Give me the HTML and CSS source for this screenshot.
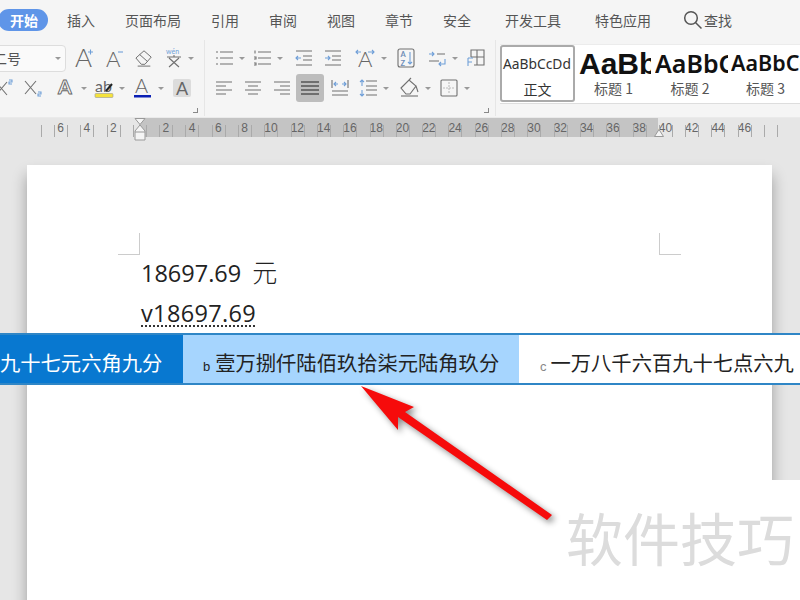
FILE: index.html
```html
<!DOCTYPE html>
<html lang="zh-CN">
<head>
<meta charset="UTF-8">
<title>文字文稿</title>
<link rel="stylesheet" href="styles.css">
</head>
<body>
<div class="app">
  <div class="tabs">
    <span class="tab active">开始</span>
    <span class="tab first">插入</span>
    <span class="tab">页面布局</span>
    <span class="tab">引用</span>
    <span class="tab">审阅</span>
    <span class="tab">视图</span>
    <span class="tab">章节</span>
    <span class="tab">安全</span>
    <span class="tab wide">开发工具</span>
    <span class="tab wide">特色应用</span>
    <span class="search">
      <svg width="20" height="20" viewBox="0 0 20 20"><circle cx="8" cy="8" r="6.3"/><path d="M12.5 12.5L18.5 18.5"/></svg>
      查找
    </span>
  </div>

  <div class="tools">
    <div class="group font-group">
      <div class="row">
        <div class="select"><span>二号</span><i class="caret"></i></div>
        <svg class="ic ml9" viewBox="0 0 18 20"><text x="0" y="19" class="big">A</text><path class="blue" d="M13 4h5M15.500 1.500v5"/></svg>
        <svg class="ic ml12" viewBox="0 0 18 20"><text x="1" y="19" class="mid">A</text><path class="blue" d="M13 4h5"/></svg>
        <svg class="ic ml12" viewBox="0 0 20 20"><path d="M1 10L10 2l8 7-7 8H7z"/><path d="M5 6l9 8M3 19h14"/></svg>
        <svg class="ic ml12" viewBox="0 0 18 20"><text x="1" y="6" class="wen">wén</text><path d="M2 9h14M9 7v2M4 10l10 9M14 10L4 19"/></svg>
        <i class="caret ml5"></i>
      </div>
      <div class="row">
        <svg class="ic neg5" viewBox="0 0 18 18"><path d="M1 3l11 13M12 3L1 16"/><path class="blue" d="M14 1h3v2h-3v2h3"/></svg>
        <svg class="ic ml11" viewBox="0 0 18 18"><path d="M1 2l11 13M12 2L1 15"/><path class="blue" d="M14 13h3v2h-3v2h3"/></svg>
        <svg class="ic ml15" viewBox="0 0 20 20"><text x="1" y="17" class="outline">A</text></svg>
        <i class="caret ml6"></i>
        <svg class="ic ml8" viewBox="0 0 18 20"><text x="0" y="14" class="small">ab</text><path d="M11 13l6-7" class="dark"/><rect y="15.500" width="18" height="4" rx="1" class="yellow"/></svg>
        <i class="caret ml6"></i>
        <svg class="ic ml9" viewBox="0 0 18 20"><text x="1" y="15" class="mid2">A</text><rect y="17" width="17" height="2.500" class="navy"/></svg>
        <i class="caret ml6"></i>
        <span class="shade-a ml9">A</span>
      </div>
      <i class="launcher"></i>
    </div>

    <div class="group para-group">
      <div class="row">
        <svg class="ic" viewBox="0 0 18 18"><path d="M5 3h13M5 9h13M5 15h13M1 3h2M1 9h2M1 15h2"/></svg>
        <i class="caret ml6"></i>
        <svg class="ic ml8" viewBox="0 0 18 18"><path d="M5 3h13M5 9h13M5 15h13M2 1.500v3M1 8h2v2H1M1 14h2v2H1"/></svg>
        <i class="caret ml6"></i>
        <svg class="ic ml12" viewBox="0 0 18 18"><path d="M1 2h16M8 7h9M8 11h9M1 16h16"/><path class="blue" d="M6 9H1M3 7L1 9l2 2"/></svg>
        <svg class="ic ml11" viewBox="0 0 18 18"><path d="M1 2h16M8 7h9M8 11h9M1 16h16"/><path class="blue" d="M1 9h5M4 7l2 2-2 2"/></svg>
        <svg class="ic wide20 ml13" viewBox="0 0 20 20"><text x="3" y="19" class="mid">A</text><path class="blue" d="M1 4h5M3 2L1 4l2 2M13 4h6M17 2l2 2-2 2"/></svg>
        <i class="caret ml6"></i>
        <svg class="ic ml10" viewBox="0 0 18 20"><rect x="1" y="1" width="16" height="18" rx="2"/><text x="3.500" y="8.500" class="az">A</text><text x="3.500" y="17.500" class="az">Z</text><path class="blue" d="M13 4v12M11 14l2 2 2-2"/></svg>
        <svg class="ic ml13" viewBox="0 0 18 18"><path d="M9 5h8M1 12h10"/><path class="blue" d="M1 5h5M4 3l2 2-2 2M17 10v5h-6M13 13l-2 2 2 2"/></svg>
        <i class="caret ml6"></i>
        <svg class="ic ml9" viewBox="0 0 18 18"><path d="M4 8V1h13v15H7M10 1v15M4 8h13"/><path class="blue" d="M1 9v8M1 9h5M1 13h4"/></svg>
      </div>
      <div class="row">
        <svg class="ic" viewBox="0 0 18 18"><path d="M1 3h16M1 7h10M1 11h16M1 15h10"/></svg>
        <svg class="ic ml11" viewBox="0 0 18 18"><path d="M1 3h16M4 7h10M1 11h16M4 15h10"/></svg>
        <svg class="ic ml11" viewBox="0 0 18 18"><path d="M1 3h16M7 7h10M1 11h16M7 15h10"/></svg>
        <span class="justify ml5"><svg width="18" height="18" viewBox="0 0 18 18"><path d="M0 3h18M0 7h18M0 11h18M0 15h18"/></svg></span>
        <svg class="ic ml7" viewBox="0 0 18 18"><path d="M1 1v8M17 1v8M1 12h16M1 16h16"/><path class="blue" d="M3 5h4M5 3L3 5l2 2M15 5h-4M13 3l2 2-2 2"/></svg>
        <svg class="ic ml10" viewBox="0 0 18 18"><path d="M7 2h11M7 7h11M7 11h11M7 16h11"/><path class="blue" d="M3 7V1M1 3l2-2 2 2M3 11v6M1 15l2 2 2-2"/></svg>
        <i class="caret ml6"></i>
        <svg class="ic wide20 ml11" viewBox="0 0 20 20"><path d="M1 10l8-8 7 6-6 8H6zM9 2l2-2M16 8l2 6"/><path d="M1 18h17"/></svg>
        <i class="caret ml5"></i>
        <svg class="ic ml9" viewBox="0 0 18 18"><rect x="1" y="1" width="16" height="16" rx="1"/><path class="dash" d="M9 3v12M3 9h12"/></svg>
        <i class="caret ml6"></i>
      </div>
      <i class="launcher"></i>
    </div>

    <div class="styles">
      <div class="style selected"><div class="sample s0">AaBbCcDd</div><div class="label">正文</div></div>
      <div class="style h1"><div class="sample s1">AaBb</div><div class="label">标题 1</div></div>
      <div class="style h2"><div class="sample s2">AaBbC</div><div class="label">标题 2</div></div>
      <div class="style h3"><div class="sample s3">AaBbCc</div><div class="label">标题 3</div></div>
    </div>
  </div>

  <div class="ruler">
    <span class="cell half"></span>
    <span class="cell">6</span>
    <span class="cell">4</span>
    <span class="cell">2</span>
    <span class="cell"></span>
    <span class="cell">2</span>
    <span class="cell">4</span>
    <span class="cell">6</span>
    <span class="cell">8</span>
    <span class="cell">10</span>
    <span class="cell">12</span>
    <span class="cell">14</span>
    <span class="cell">16</span>
    <span class="cell">18</span>
    <span class="cell">20</span>
    <span class="cell">22</span>
    <span class="cell">24</span>
    <span class="cell">26</span>
    <span class="cell">28</span>
    <span class="cell">30</span>
    <span class="cell">32</span>
    <span class="cell">34</span>
    <span class="cell">36</span>
    <span class="cell">38</span>
    <span class="cell">40</span>
    <span class="cell">42</span>
    <span class="cell">44</span>
    <span class="cell">46</span>
    <span class="cell"></span>
    <svg class="indent-left" width="12" height="24" viewBox="0 0 12 24"><path d="M1 .5h10L6 6.500zM6 7l5 6v9H1v-9zM1 14h10"/></svg>
    <svg class="indent-right" width="10" height="8" viewBox="0 0 10 8"><path d="M5 .5L9.500 7.500H.5z"/></svg>
  </div>

  <div class="canvas">
    <div class="page">
      <i class="corner left"></i>
      <i class="corner right"></i>
      <p class="line">18697.69<span class="yuan">元</span></p>
      <p class="line"><span class="dotted">v18697.69</span></p>
    </div>
  </div>

  <div class="candidates">
    <div class="cand cand-a">九十七元六角九分</div>
    <div class="cand cand-b"><small>b</small>壹万捌仟陆佰玖拾柒元陆角玖分</div>
    <div class="cand cand-c"><small>c</small>一万八千六百九十七点六九</div>
  </div>

  <div class="watermark">软件技巧</div>

  <svg class="arrow" width="800" height="600" viewBox="0 0 800 600"><polygon points="361,386 414,407 405,412 552,515 547,520 398,417 398,430"/></svg>
</div>
</body>
</html>
```

FILE: styles.css
```css
*{
 box-sizing: border-box;
}
body{
 margin: 0;
 font-family: "Noto Sans CJK SC", "Noto Sans", sans-serif;
}
.app{
 position: relative;
 width: 800px;
 height: 600px;
 overflow: hidden;
 display: flex;
 flex-direction: column;
 background-color: #e6e6e6;
}

/* top tabs */
.tabs{
 height: 40px;
 flex: none;
 display: flex;
 align-items: center;
 gap: 30px;
 background-color: #f5f5f5;
 color: #555;
 font-size: 14px;
}
.tab{
 white-space: nowrap;
}
.tab.active{
 width: 50px;
 height: 22px;
 margin-left: -2px;
 padding-left: 12px;
 line-height: 22px;
 border-radius: 11px;
 background-color: #5f95e8;
 color: #fff;
 font-weight: bold;
}
.tab.first{
 margin-left: -11px;
}
.tab.wide{
 margin-left: 4px;
}
.search{
 margin-left: 2px;
 display: flex;
 align-items: center;
 gap: 1px;
}
.search svg{
 fill: none;
 stroke: #555;
 stroke-width: 1.5;
}

/* ribbon */
.tools{
 height: 78px;
 flex: none;
 display: flex;
 background-color: #f5f5f5;
 border-bottom: 1px solid #eaeaea;
}
.group{
 position: relative;
 padding-top: 4px;
 display: flex;
 flex-direction: column;
 gap: 2px;
 border-right: 1px solid #e6e6e6;
 height: 76px;
}
.font-group{
 width: 205px;
}
.para-group{
 width: 291px;
 padding-left: 10px;
}
.row{
 height: 28px;
 display: flex;
 align-items: center;
}
.ic{
 flex: none;
 width: 18px;
 height: 20px;
 overflow: visible;
 fill: none;
 stroke: #707070;
 stroke-width: 1.1;
}
.ic.wide20{
 width: 20px;
}
.ic text{
 font-family: "Lato", "Liberation Sans", sans-serif;
 font-weight: 300;
 fill: #666;
 stroke: none;
}
.ic .big{
 font-size: 26px;
}
.ic .mid{
 font-size: 22px;
}
.ic .mid2{
 font-size: 20px;
}
.ic .small{
 font-size: 16px;
 font-weight: 400;
}
.ic .wen{
 font-size: 7px;
 font-weight: 400;
 fill: #6f9fd8;
}
.ic .outline{
 font-size: 22px;
 font-weight: 700;
 fill: #f5f5f5;
 stroke: #666;
 stroke-width: 1;
}
.ic .az{
 font-size: 7.5px;
 font-weight: 700;
 fill: #6f8fb8;
}
.ic .blue{
 stroke: #6f9fd8;
}
.ic .dark{
 stroke: #222;
 stroke-width: 2;
}
.ic .yellow{
 fill: #f5e23c;
 stroke: #999;
 stroke-width: .6;
}
.ic .navy{
 fill: #0a1fb4;
 stroke: none;
}
.ic .dash{
 stroke: #bbb;
 stroke-dasharray: 2 1;
}
.caret{
 flex: none;
 width: 0;
 height: 0;
 border-left: 3px solid transparent;
 border-right: 3px solid transparent;
 border-top: 3px solid #999;
}
.ml5{margin-left: 5px;}
.ml6{margin-left: 6px;}
.ml7{margin-left: 7px;}
.ml8{margin-left: 8px;}
.ml9{margin-left: 9px;}
.ml10{margin-left: 10px;}
.ml11{margin-left: 11px;}
.ml12{margin-left: 12px;}
.ml13{margin-left: 13px;}
.ml15{margin-left: 15px;}
.neg5{
 margin-left: -5px;
}
.select{
 flex: none;
 width: 76px;
 height: 27px;
 margin-left: -10px;
 padding: 0 4px 0 2px;
 display: flex;
 align-items: center;
 justify-content: space-between;
 background-color: #fafafa;
 border: 1px solid #ddd;
 border-radius: 4px;
 color: #555;
 font-size: 14px;
}
.shade-a{
 flex: none;
 width: 18px;
 height: 18px;
 line-height: 18px;
 text-align: center;
 background-color: #dcdcdc;
 border-radius: 2px;
 color: #666;
 font-family: "Lato", "Liberation Sans", sans-serif;
 font-size: 18px;
}
.justify{
 flex: none;
 width: 28px;
 height: 28px;
 padding: 5px;
 background-color: #bdbdbd;
 border-radius: 3px;
}
.justify svg{
 display: block;
 fill: none;
 stroke: #555;
 stroke-width: 1.4;
}
.launcher{
 position: absolute;
 right: 6px;
 bottom: 3px;
 width: 5px;
 height: 5px;
 border-right: 1px solid #888;
 border-bottom: 1px solid #888;
}

/* style gallery */
.styles{
 flex: 1;
 height: 60px;
 margin: 4px 0 0 4px;
 display: flex;
 overflow: hidden;
 background-color: #fff;
 border-top: 1px solid #ececec;
 border-bottom: 1px solid #ddd;
}
.style{
 flex: none;
 overflow: hidden;
 text-align: center;
}
.selected{
 width: 75px;
 height: 57px;
 border: 2px solid #aaa;
 border-radius: 3px;
}
.h1{
 width: 72px;
 margin-left: 4px;
}
.h2{
 width: 73px;
 margin-left: 4px;
}
.h3{
 width: 72px;
 margin-left: 3px;
}
.sample{
 height: 33px;
 white-space: nowrap;
 color: #111;
 font-family: "Liberation Sans", sans-serif;
 text-align: left;
}
.s0{
 padding: 7px 0 0 1px;
 font-size: 13.8px;
 font-family: "Noto Sans", sans-serif;
 color: #333;
}
.s1{
 padding-top: 4px;
 font-size: 30px;
 font-weight: bold;
 line-height: 29px;
}
.s2{
 padding-top: 3px;
 font-size: 25px;
 font-weight: 600;
 line-height: 30px;
 font-family: "Noto Sans", sans-serif;
}
.s3{
 padding-top: 3px;
 font-size: 21.5px;
 font-weight: 600;
 line-height: 30px;
 font-family: "Noto Sans", sans-serif;
}
.label{
 margin-top: 1px;
 padding-right: 3px;
 color: #555;
 font-size: 14px;
 line-height: 18px;
}
.selected .label{
 margin-top: 0;
 padding-right: 0;
 color: #333;
}

/* ruler */
.ruler{
 position: relative;
 height: 19px;
 flex: none;
 padding-left: 27.7px;
 display: flex;
 background: linear-gradient(90deg, transparent 139px, #c4c4c4 139px, #c4c4c4 658px, transparent 658px);
}
.cell{
 position: relative;
 flex: none;
 width: 26.3px;
 height: 19px;
 padding-right: 13px;
 text-align: center;
 color: #666;
 font-family: "Liberation Sans", sans-serif;
 font-size: 12px;
 line-height: 20px;
 white-space: nowrap;
}
.cell::before,
.cell::after{
 content: "";
 position: absolute;
 top: 7px;
 height: 12px;
 width: 1px;
 background-color: #aaa;
}
.cell::before{
 left: 0;
}
.cell::after{
 left: 13px;
}
.cell.half::before{
 display: none;
}
.indent-left{
 position: absolute;
 left: 134px;
 top: 0;
 fill: #f5f5f5;
 stroke: #999;
}
.indent-right{
 position: absolute;
 left: 654px;
 top: 11px;
 fill: #f5f5f5;
 stroke: #999;
}

/* document */
.canvas{
 flex: 1;
 padding: 28px 0 0 27px;
 overflow: hidden;
}
.page{
 position: relative;
 width: 745px;
 height: 460px;
 padding: 88px 0 0 114px;
 background-color: #fff;
 box-shadow: 0 10px 14px rgba(0,0,0,.32);
}
.line{
 margin: 0;
 height: 40px;
 color: #222;
 font-family: "Open Sans", "Noto Sans CJK SC", sans-serif;
 font-size: 23.5px;
 line-height: 40px;
}
.yuan{
 margin-left: 11px;
 font-family: "Noto Sans CJK SC", sans-serif;
 font-size: 25px;
 font-weight: 300;
 line-height: 1;
}
.dotted{
 letter-spacing: .35px;
 text-decoration: underline dotted #333 2px;
 text-underline-offset: 3px;
}
.corner{
 position: absolute;
 top: 68px;
 width: 22px;
 height: 22px;
 border-bottom: 1px solid #ccc;
}
.corner.left{
 left: 91px;
 border-right: 1px solid #ccc;
}
.corner.right{
 left: 632px;
 border-left: 1px solid #ccc;
}

/* input candidates over the page */
.candidates{
 position: absolute;
 left: 0;
 top: 333px;
 width: 800px;
 height: 52px;
 display: flex;
 background-color: #fff;
 border-top: 2px solid #2f86c6;
 border-bottom: 2px solid #2f86c6;
 font-size: 20.3px;
 line-height: 48px;
 white-space: nowrap;
}
.cand{
 padding-top: 3px;
}
.cand small{
 font-family: "Liberation Sans", sans-serif;
 font-size: 13px;
}
.cand-a{
 width: 183px;
 padding-right: 21px;
 text-align: right;
 background-color: #0878d0;
 color: #fff;
}
.cand-b{
 width: 336px;
 padding-left: 20px;
 background-color: #a6d5fe;
 color: #222;
}
.cand-b small{
 margin-right: 5px;
}
.cand-c{
 flex: 1;
 padding-left: 21px;
 color: #222;
}
.cand-c small{
 margin-right: 4px;
 color: #888;
}

.watermark{
 position: absolute;
 right: 0;
 top: 480px;
 width: 240px;
 height: 120px;
 text-align: center;
 background-color: #fff;
 color: #dcdcdc;
 font-size: 57px;
 line-height: 112px;
 white-space: nowrap;
}
.arrow{
 position: absolute;
 left: 0;
 top: 0;
 fill: #f60b0b;
 filter: drop-shadow(3px 3px 3px rgba(0,0,0,.45));
}
```
